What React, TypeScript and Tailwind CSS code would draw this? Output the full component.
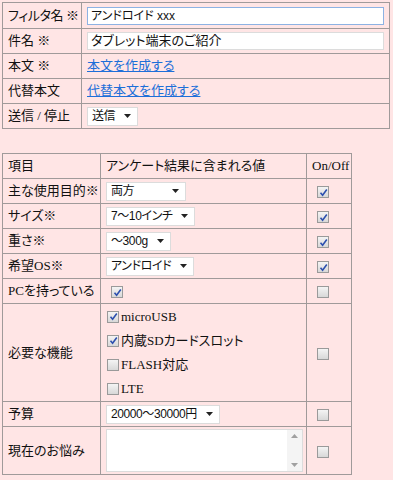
import React from "react";

const serif = "font-['Liberation_Serif','Noto_Sans_CJK_JP',serif]";
const sans = "font-['Liberation_Sans','Noto_Sans_CJK_JP',sans-serif]";

const Check = ({ on }: { on?: boolean }) => (
  <span className="inline-flex h-[12px] w-[12px] shrink-0 items-center justify-center border border-[#9a9a9a] bg-linear-to-b from-[#f4f4f4] to-[#d8d8d8] align-middle">
    {on && (
      <svg width="9" height="9" viewBox="0 0 9 9">
        <path d="M1.5 4.8 L3.6 7.2 L7.8 1.6" fill="none" stroke="#2c4fae" strokeWidth="1.6" />
      </svg>
    )}
  </span>
);

const Select = ({ value, className }: { value: string; className: string }) => (
  <span
    className={`inline-flex h-[19px] items-center justify-between gap-[9px] whitespace-nowrap border border-[#dcdcdc] bg-white pl-[4px] pr-[6px] align-middle text-[12px] leading-none tracking-[-0.4px] text-[#111] ${sans} ${className}`}
  >
    <span>{value}</span>
    <svg width="7" height="4" viewBox="0 0 7 4" className="shrink-0">
      <path d="M0 0 H7 L3.5 4 Z" fill="#222" />
    </svg>
  </span>
);

const cell = "border border-[#a09a9a] px-[5px] align-middle whitespace-nowrap leading-[16px]";

const App = () => {
  return (
    <div
      className={`min-h-screen bg-[#ffe5e5] pl-[2px] pt-[2px] text-[13px] text-[#111] [font-feature-settings:'palt'] ${serif}`}
    >
      <table className="w-[388px] table-fixed border-collapse">
        <colgroup>
          <col className="w-[79px]" />
          <col />
        </colgroup>
        <tbody>
          <tr className="h-[26px]">
            <td className={`${cell} tracking-[-0.4px]`}>フィルタ名 ※</td>
            <td className={cell}>
              <div className={`flex h-[18px] items-center border border-[#8db2e3] bg-white px-[3px] text-[12px] ${sans}`}>
                アンドロイド xxx
              </div>
            </td>
          </tr>
          <tr className="h-[25px]">
            <td className={cell}>件名 ※</td>
            <td className={cell}>
              <div className={`flex h-[18px] items-center border border-[#dcdcdc] bg-white px-[3px] text-[13px] ${sans}`}>
                タブレット端末のご紹介
              </div>
            </td>
          </tr>
          <tr className="h-[25px]">
            <td className={cell}>本文 ※</td>
            <td className={cell}>
              <a className="text-[#1d6fd9] underline">本文を作成する</a>
            </td>
          </tr>
          <tr className="h-[25px]">
            <td className={cell}>代替本文</td>
            <td className={cell}>
              <a className="text-[#1d6fd9] underline">代替本文を作成する</a>
            </td>
          </tr>
          <tr className="h-[25px]">
            <td className={cell}>送信 / 停止</td>
            <td className={cell}>
              <Select value="送信" className="min-w-[47px]" />
            </td>
          </tr>
        </tbody>
      </table>

      <table className="mt-[24px] w-[350px] table-fixed border-collapse">
        <colgroup>
          <col className="w-[98px]" />
          <col className="w-[206px]" />
          <col />
        </colgroup>
        <tbody>
          <tr className="h-[25px]">
            <td className={cell}>項目</td>
            <td className={cell}>アンケート結果に含まれる値</td>
            <td className={`${cell} px-[4px]`}>On/Off</td>
          </tr>
          <tr className="h-[25px]">
            <td className={cell}>主な使用目的※</td>
            <td className={cell}>
              <Select value="両方" className="min-w-[80px]" />
            </td>
            <td className={`${cell} pl-[10px]`}>
              <Check on />
            </td>
          </tr>
          <tr className="h-[25px]">
            <td className={cell}>サイズ※</td>
            <td className={cell}>
              <Select value="7〜10インチ" className="min-w-[83px]" />
            </td>
            <td className={`${cell} pl-[10px]`}>
              <Check on />
            </td>
          </tr>
          <tr className="h-[25px]">
            <td className={cell}>重さ※</td>
            <td className={cell}>
              <Select value="〜300g" className="min-w-[59px]" />
            </td>
            <td className={`${cell} pl-[10px]`}>
              <Check on />
            </td>
          </tr>
          <tr className="h-[25px]">
            <td className={cell}>希望OS※</td>
            <td className={cell}>
              <Select value="アンドロイド" className="min-w-[86px]" />
            </td>
            <td className={`${cell} pl-[10px]`}>
              <Check on />
            </td>
          </tr>
          <tr className="h-[25px]">
            <td className={cell}>PCを持っている</td>
            <td className={`${cell} pl-[10px]`}>
              <Check on />
            </td>
            <td className={`${cell} pl-[10px]`}>
              <Check />
            </td>
          </tr>
          <tr className="h-[98px]">
            <td className={cell}>必要な機能</td>
            <td className={`${cell} pl-[6px]`}>
              <div className="flex flex-col gap-[12px]">
                <label className="flex items-center gap-[2px] leading-[12px]">
                  <Check on />
                  microUSB
                </label>
                <label className="flex items-center gap-[2px] leading-[12px]">
                  <Check on />
                  内蔵SDカードスロット
                </label>
                <label className="flex items-center gap-[2px] leading-[12px]">
                  <Check />
                  FLASH対応
                </label>
                <label className="flex items-center gap-[2px] leading-[12px]">
                  <Check />
                  LTE
                </label>
              </div>
            </td>
            <td className={`${cell} pl-[10px]`}>
              <Check />
            </td>
          </tr>
          <tr className="h-[25px]">
            <td className={cell}>予算</td>
            <td className={cell}>
              <Select value="20000〜30000円" className="min-w-[109px]" />
            </td>
            <td className={`${cell} pl-[10px]`}>
              <Check />
            </td>
          </tr>
          <tr className="h-[48px]">
            <td className={cell}>現在のお悩み</td>
            <td className={`${cell} py-[2px] pr-[3px]`}>
              <div className="flex h-[43px] border border-[#dcdcdc] bg-white">
                <div className="flex-1" />
                <div className="flex w-[15px] flex-col items-center justify-between bg-[#f4f4f4] py-[4px]">
                  <svg width="7" height="4" viewBox="0 0 7 4">
                    <path d="M0 4 H7 L3.5 0 Z" fill="#a0a0a0" />
                  </svg>
                  <svg width="7" height="4" viewBox="0 0 7 4">
                    <path d="M0 0 H7 L3.5 4 Z" fill="#a0a0a0" />
                  </svg>
                </div>
              </div>
            </td>
            <td className={`${cell} pl-[10px]`}>
              <Check />
            </td>
          </tr>
        </tbody>
      </table>
    </div>
  );
};

export default App;
